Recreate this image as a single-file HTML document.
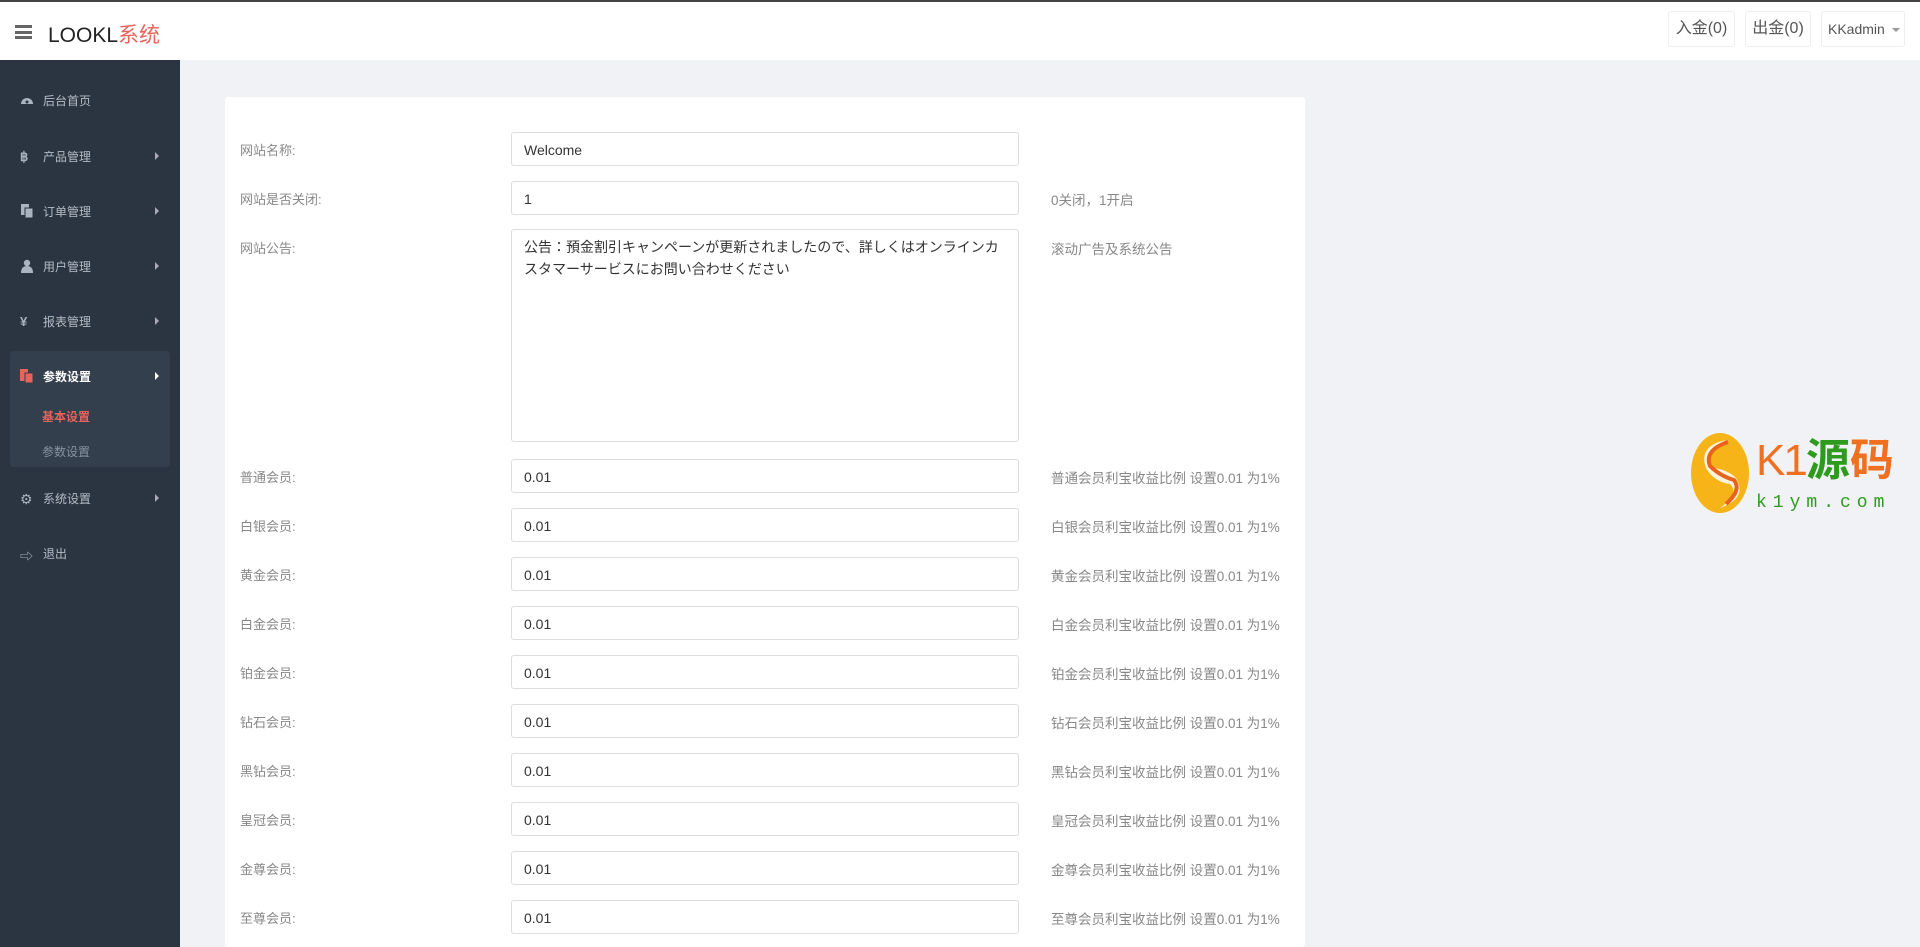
<!DOCTYPE html>
<html><head><meta charset="utf-8"><style>
*{box-sizing:border-box;margin:0;padding:0}
html,body{width:1920px;height:947px;overflow:hidden}
body{background:#f0f2f5;font-family:"Liberation Sans","Noto Sans CJK SC",sans-serif;position:relative}
.top{position:absolute;left:0;top:0;width:1920px;height:60px;background:#fff;border-top:2px solid #444}
.ham{position:absolute;left:15px;top:23px;width:17px;height:14px}
.ham i{display:block;height:3px;background:#666;margin-bottom:2.5px}
.brand{position:absolute;left:48px;top:17px;font-size:21px;color:#222}
.brand span{color:#e8635a}
.btn{position:absolute;top:9px;height:36px;border:1px solid #eee;border-radius:3px;font-size:16px;color:#555;line-height:34px;text-align:center;background:#fff}
.side{position:absolute;left:0;top:60px;width:180px;height:887px;background:#2b3541}
.mi{position:absolute;left:20px;font-size:12px;color:#b4bcc6;display:flex;align-items:center;height:20px}
.mi .ic{width:14px;height:14px;margin-right:9px;display:inline-block}
.arr{position:absolute;left:155px;width:0;height:0;border-left:4px solid #aab;border-top:4px solid transparent;border-bottom:4px solid transparent}
.grp{position:absolute;left:10px;top:291px;width:160px;height:116px;background:#333f4c;border-radius:4px}
.card{position:absolute;left:225px;top:97px;width:1080px;height:850px;background:#fff;border-radius:3px}
.lab{position:absolute;left:240px;font-size:13px;color:#888}
.inp{position:absolute;left:511px;width:508px;height:34px;border:1px solid #ddd;border-radius:3px;background:#fff;font-size:14px;color:#333;padding:9px 12px}
.help{position:absolute;left:1051px;font-size:13.5px;color:#888}
</style></head><body>
<div class="top">
<div class="ham"><i></i><i></i><i></i></div>
<div class="brand">LOOKL<span>系统</span></div>
<div class="btn" style="left:1668px;width:67px">入金(0)</div>
<div class="btn" style="left:1745px;width:66px">出金(0)</div>
<div class="btn" style="left:1821px;width:84px;font-size:14px;text-align:left;padding-left:6px">KKadmin <span style="display:inline-block;border-top:4px solid #999;border-left:4px solid transparent;border-right:4px solid transparent;vertical-align:middle;margin-left:3px"></span></div>
</div>
<div class="side">
<div class="grp"></div>
<div class="mi" style="top:30px"><svg class="ic" viewBox="0 0 14 14"><path d="M1 11A6 6 0 1 1 13 11Z" fill="#aab4c0"/><circle cx="7" cy="9" r="1.5" fill="#2b3541"/></svg>后台首页</div>
<div class="mi" style="top:86px"><span class="ic" style="color:#aab4c0;font-weight:bold;font-size:13px">฿</span>产品管理</div><div class="arr" style="top:92px"></div>
<div class="mi" style="top:141px"><svg class="ic" viewBox="0 0 14 14"><rect x="1" y="0" width="8" height="11" fill="#aab4c0"/><rect x="5" y="4" width="8" height="10" fill="#aab4c0" stroke="#2b3541"/></svg>订单管理</div><div class="arr" style="top:147px"></div>
<div class="mi" style="top:196px"><svg class="ic" viewBox="0 0 14 14"><circle cx="7" cy="4" r="3.2" fill="#aab4c0"/><path d="M1 14Q1 7 7 7Q13 7 13 14Z" fill="#aab4c0"/></svg>用户管理</div><div class="arr" style="top:202px"></div>
<div class="mi" style="top:251px"><span class="ic" style="color:#aab4c0;font-weight:bold;font-size:13px">¥</span>报表管理</div><div class="arr" style="top:257px"></div>
<div class="mi" style="top:306px;color:#fff;font-weight:bold"><svg class="ic" viewBox="0 0 14 14"><rect x="0" y="0" width="8" height="12" fill="#e8635a"/><rect x="5" y="4" width="8" height="10" fill="#e8635a" stroke="#333f4c"/></svg>参数设置</div><div class="arr" style="top:312px;border-left-color:#fff"></div>
<div class="mi" style="top:346px;left:42px;color:#e8635a;font-weight:bold">基本设置</div>
<div class="mi" style="top:381px;left:42px;color:#8893a0">参数设置</div>
<div class="mi" style="top:428px"><span class="ic" style="color:#aab4c0;font-size:14px">⚙</span>系统设置</div><div class="arr" style="top:434px"></div>
<div class="mi" style="top:483px"><span class="ic" style="color:#aab4c0;font-size:13px">⇨</span>退出</div>
</div>
<div class="card"></div>
<div class="lab" style="top:140px">网站名称:</div><div class="inp" style="top:132px">Welcome</div>
<div class="lab" style="top:189px">网站是否关闭:</div><div class="inp" style="top:181px">1</div><div class="help" style="top:189px">0关闭，1开启</div>
<div class="lab" style="top:238px">网站公告:</div><div class="inp" style="top:229px;height:213px;line-height:22px;font-family:'Liberation Sans','Noto Sans CJK JP',sans-serif;padding:6px 12px">公告：預金割引キャンペーンが更新されましたので、詳しくはオンラインカスタマーサービスにお問い合わせください</div><div class="help" style="top:238px">滚动广告及系统公告</div>
<div class="lab" style="top:467px">普通会员:</div><div class="inp" style="top:459px">0.01</div><div class="help" style="top:467px">普通会员利宝收益比例 设置0.01 为1%</div>
<div class="lab" style="top:516px">白银会员:</div><div class="inp" style="top:508px">0.01</div><div class="help" style="top:516px">白银会员利宝收益比例 设置0.01 为1%</div>
<div class="lab" style="top:565px">黄金会员:</div><div class="inp" style="top:557px">0.01</div><div class="help" style="top:565px">黄金会员利宝收益比例 设置0.01 为1%</div>
<div class="lab" style="top:614px">白金会员:</div><div class="inp" style="top:606px">0.01</div><div class="help" style="top:614px">白金会员利宝收益比例 设置0.01 为1%</div>
<div class="lab" style="top:663px">铂金会员:</div><div class="inp" style="top:655px">0.01</div><div class="help" style="top:663px">铂金会员利宝收益比例 设置0.01 为1%</div>
<div class="lab" style="top:712px">钻石会员:</div><div class="inp" style="top:704px">0.01</div><div class="help" style="top:712px">钻石会员利宝收益比例 设置0.01 为1%</div>
<div class="lab" style="top:761px">黑钻会员:</div><div class="inp" style="top:753px">0.01</div><div class="help" style="top:761px">黑钻会员利宝收益比例 设置0.01 为1%</div>
<div class="lab" style="top:810px">皇冠会员:</div><div class="inp" style="top:802px">0.01</div><div class="help" style="top:810px">皇冠会员利宝收益比例 设置0.01 为1%</div>
<div class="lab" style="top:859px">金尊会员:</div><div class="inp" style="top:851px">0.01</div><div class="help" style="top:859px">金尊会员利宝收益比例 设置0.01 为1%</div>
<div class="lab" style="top:908px">至尊会员:</div><div class="inp" style="top:900px">0.01</div><div class="help" style="top:908px">至尊会员利宝收益比例 设置0.01 为1%</div>
<svg style="position:absolute;left:1690px;top:432px" width="60" height="82" viewBox="0 0 60 82"><ellipse cx="30" cy="41" rx="29" ry="40" fill="#f6b418"/><path d="M36 8Q8 14 16 36Q24 50 40 52Q50 62 30 76Q58 66 46 46Q38 38 24 36Q12 22 36 8Z" fill="#fff" opacity=".85"/><path d="M38 10Q14 18 20 34Q30 44 44 48Q52 58 36 72" stroke="#e8631e" stroke-width="4" fill="none"/></svg>
<div style="position:absolute;left:1756px;top:436px;font-size:44px;line-height:50px;font-family:'Liberation Sans','Noto Sans CJK SC',sans-serif;white-space:nowrap"><span style="color:#f07022;letter-spacing:-2px">K1</span><span style="color:#2e9a1e;font-weight:bold">源</span><span style="color:#f07022;font-weight:bold">码</span></div>
<div style="position:absolute;left:1756px;top:493px;font-size:18px;letter-spacing:6px;color:#2e9a1e;font-family:'Liberation Mono',monospace">k1ym.com</div>
</body></html>
